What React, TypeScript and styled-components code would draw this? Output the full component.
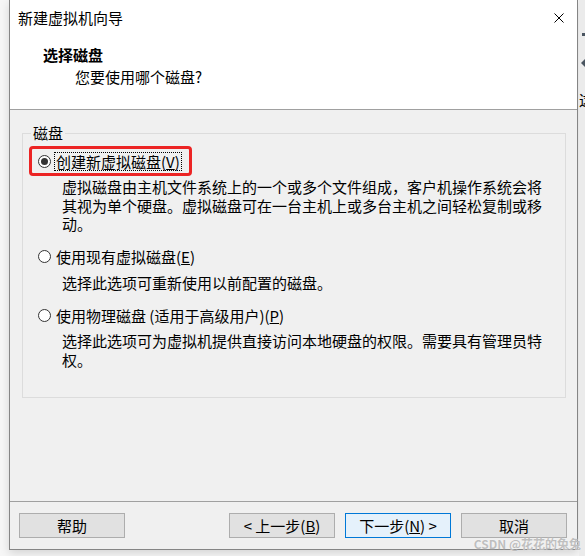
import React from "react";
import styled, { createGlobalStyle } from "styled-components";

const GlobalStyle = createGlobalStyle`
  html, body {
    margin: 0;
    padding: 0;
    background: #f6f6f6;
  }
  body {
    font-family: "Noto Sans CJK SC", "Noto Sans", sans-serif;
    font-size: 15px;
    color: #000;
  }
`;

const Page = styled.div`
  position: relative;
  display: flex;
  width: 585px;
  height: 556px;
  overflow: hidden;
  background: #f6f6f6;
`;

const LeftGutter = styled.div`
  flex: none;
  width: 9px;
`;

const Window = styled.div`
  flex: none;
  width: 569px;
  height: 550px;
  box-sizing: border-box;
  border: 1px solid #858585;
  border-top: none;
  background: #f0f0f0;
  display: flex;
  flex-direction: column;
  box-shadow: 0 3px 9px rgba(0, 0, 0, 0.14);
`;

const RightStrip = styled.div`
  flex: none;
  width: 7px;
  margin-left: 1px;
  background: #ebebeb;
  display: flex;
  flex-direction: column;
  overflow: hidden;
`;

const StripDash = styled.div`
  margin-top: 33px;
  margin-left: 3px;
  width: 6px;
  height: 3px;
  background: #4a5560;
`;

const StripArrow = styled.div`
  margin-top: 22px;
  margin-left: 2px;
  width: 0;
  height: 0;
  border-top: 5px solid transparent;
  border-bottom: 5px solid transparent;
  border-right: 5px solid #4a5560;
`;

const StripChar = styled.div`
  margin-top: 22px;
  font-size: 15px;
  line-height: 20px;
  white-space: nowrap;
  color: #000;
`;

const TitleBar = styled.div`
  flex: none;
  height: 36px;
  background: #fff;
  display: flex;
  align-items: center;
  justify-content: space-between;
  padding: 0 13px 0 8px;
`;

const TitleText = styled.span`
  font-size: 15px;
  line-height: 20px;
`;

const CloseIcon = styled.svg`
  display: block;
  width: 10px;
  height: 10px;
`;

const Header = styled.div`
  flex: none;
  background: #fff;
  padding: 9px 0 22px 33px;
`;

const HeaderTitle = styled.div`
  font-weight: bold;
  line-height: 20px;
`;

const HeaderSubtitle = styled.div`
  margin-top: 2px;
  padding-left: 32px;
  line-height: 20px;
`;

const Rule = styled.div`
  flex: none;
  height: 1px;
  background: #a0a0a0;
`;

const Body = styled.div`
  flex: 1;
  padding: 13px 0 0 12px;
`;

const GroupBox = styled.fieldset`
  margin: 0;
  padding: 0;
  min-width: 0;
  width: 544px;
  box-sizing: border-box;
  border: 1px solid #dcdcdc;
`;

const GroupLegend = styled.legend`
  margin-left: 8px;
  padding: 0 2px;
  line-height: 20px;
`;

const GroupContent = styled.div`
  padding: 8px 0 28px 15px;
  display: flex;
  flex-direction: column;
  gap: 13px;
`;

const Option = styled.div`
  display: flex;
  flex-direction: column;
`;

const OptionRow = styled.div`
  position: relative;
  height: 20px;
  display: flex;
  align-items: center;
`;

const Radio = styled.span<{ $checked?: boolean }>`
  flex: none;
  position: relative;
  width: 13px;
  height: 13px;
  box-sizing: border-box;
  border: 1px solid #333;
  border-radius: 50%;
  background: #fff;
  margin-right: 3px;
  display: flex;
  align-items: center;
  justify-content: center;

  &::after {
    content: "";
    display: ${(p) => (p.$checked ? "block" : "none")};
    width: 7px;
    height: 7px;
    border-radius: 50%;
    background: #333;
  }
`;

const OptionLabel = styled.span<{ $focused?: boolean }>`
  line-height: 17px;
  padding: 0 1px;
  border: 1px dotted ${(p) => (p.$focused ? "#000" : "transparent")};
  white-space: nowrap;
`;

const Highlight = styled.div`
  position: absolute;
  left: -9px;
  top: -5px;
  width: 163px;
  height: 30px;
  box-sizing: border-box;
  border: 3px solid #ec2424;
  border-radius: 4px;
  pointer-events: none;
`;

const Description = styled.div`
  margin: 7px 0 0 24px;
  width: 488px;
  line-height: 18.5px;
`;

const Footer = styled.div`
  flex: none;
  display: flex;
  align-items: center;
  padding: 11px 10px 11px 9px;
`;

const NavGroup = styled.div`
  margin-left: auto;
  display: flex;
  gap: 10px;
`;

const Button = styled.button<{ $primary?: boolean }>`
  width: 106px;
  height: 25px;
  box-sizing: border-box;
  margin: 0;
  padding: 0;
  font-family: inherit;
  font-size: 15px;
  line-height: 20px;
  color: #000;
  background: ${(p) => (p.$primary ? "#e5f1fb" : "#e1e1e1")};
  border: 1px solid ${(p) => (p.$primary ? "#0078d7" : "#adadad")};
  border-radius: 0;
`;

const Watermark = styled.span`
  position: absolute;
  right: 4px;
  top: 537px;
  font-size: 12px;
  line-height: 14px;
  font-weight: bold;
  color: rgba(170, 170, 170, 0.75);
  text-shadow: 0 0 1px #fff;
  white-space: nowrap;
  pointer-events: none;
`;

export default function App() {
  return (
    <>
      <GlobalStyle />
      <Page>
        <LeftGutter />
        <Window>
          <TitleBar>
            <TitleText>新建虚拟机向导</TitleText>
            <CloseIcon viewBox="0 0 10 10">
              <path d="M0.5 0.5 L9.5 9.5 M9.5 0.5 L0.5 9.5" stroke="#000" strokeWidth="1" fill="none" />
            </CloseIcon>
          </TitleBar>
          <Header>
            <HeaderTitle>选择磁盘</HeaderTitle>
            <HeaderSubtitle>您要使用哪个磁盘?</HeaderSubtitle>
          </Header>
          <Rule />
          <Body>
            <GroupBox>
              <GroupLegend>磁盘</GroupLegend>
              <GroupContent>
                <Option>
                  <OptionRow>
                    <Radio $checked />
                    <OptionLabel $focused>
                      创建新虚拟磁盘(<u>V</u>)
                    </OptionLabel>
                    <Highlight />
                  </OptionRow>
                  <Description>
                    虚拟磁盘由主机文件系统上的一个或多个文件组成，客户机操作系统会将其视为单个硬盘。虚拟磁盘可在一台主机上或多台主机之间轻松复制或移动。
                  </Description>
                </Option>
                <Option>
                  <OptionRow>
                    <Radio />
                    <OptionLabel>
                      使用现有虚拟磁盘(<u>E</u>)
                    </OptionLabel>
                  </OptionRow>
                  <Description>选择此选项可重新使用以前配置的磁盘。</Description>
                </Option>
                <Option>
                  <OptionRow>
                    <Radio />
                    <OptionLabel>
                      使用物理磁盘 (适用于高级用户)(<u>P</u>)
                    </OptionLabel>
                  </OptionRow>
                  <Description>
                    选择此选项可为虚拟机提供直接访问本地硬盘的权限。需要具有管理员特权。
                  </Description>
                </Option>
              </GroupContent>
            </GroupBox>
          </Body>
          <Rule />
          <Footer>
            <Button>帮助</Button>
            <NavGroup>
              <Button>
                &lt; 上一步(<u>B</u>)
              </Button>
              <Button $primary>
                下一步(<u>N</u>) &gt;
              </Button>
              <Button>取消</Button>
            </NavGroup>
          </Footer>
        </Window>
        <RightStrip>
          <StripDash />
          <StripArrow />
          <StripChar>这</StripChar>
        </RightStrip>
        <Watermark>CSDN @花花的兔兔</Watermark>
      </Page>
    </>
  );
}
